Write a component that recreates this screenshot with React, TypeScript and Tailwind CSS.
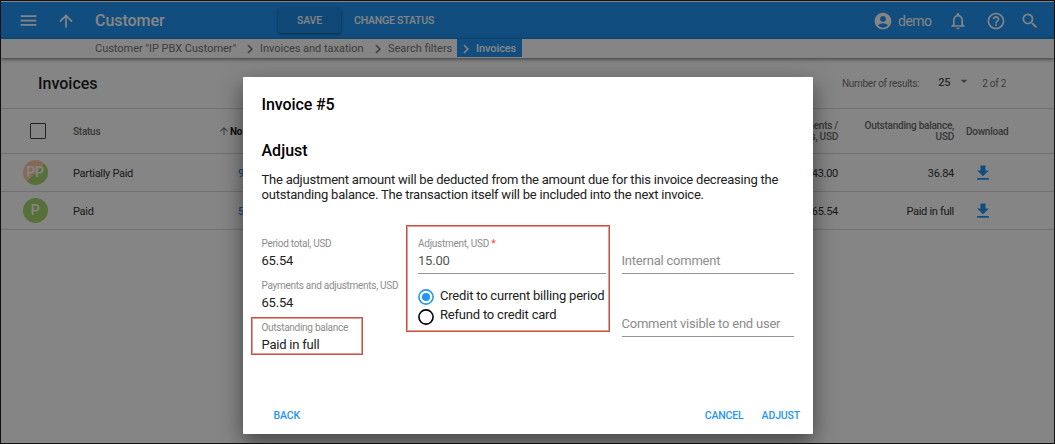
import type { ReactNode } from "react";
import {
  MdAccountCircle,
  MdArrowDropDown,
  MdArrowUpward,
  MdChevronRight,
  MdFileDownload,
  MdHelpOutline,
  MdMenu,
  MdNotificationsNone,
  MdSearch,
} from "react-icons/md";

function TopBar() {
  return (
    <header className="flex h-[37px] shrink-0 items-center bg-[#2196f3] pl-[17px] text-white">
      <MdMenu className="size-[21px] shrink-0" />
      <MdArrowUpward className="ml-[17px] size-5 shrink-0" />
      <h1 className="ml-[19px] w-[183px] text-[16px] leading-5 font-medium tracking-[-0.05px]">Customer</h1>
      <button className="h-[25px] w-[63px] rounded-[2px] bg-[#1e88e5] pt-px text-[10.5px] font-medium tracking-[-0.2px] shadow-[0_1px_3px_rgba(0,0,0,0.5)]">
        SAVE
      </button>
      <button className="ml-[13px] pt-px text-[10.5px] font-medium tracking-[-0.2px] whitespace-nowrap">CHANGE STATUS</button>
      <div className="ml-auto flex items-center pr-[14px]">
        <MdAccountCircle className="size-5" />
        <span className="ml-[5px] w-[50px] text-[14px] leading-5 tracking-[-0.5px]">demo</span>
        <MdNotificationsNone className="size-5" />
        <MdHelpOutline className="ml-[18px] size-5" />
        <MdSearch className="ml-[14px] size-5" />
      </div>
    </header>
  );
}

function Crumb({ children }: { children: ReactNode }) {
  return (
    <span className="flex items-center">
      <MdChevronRight className="size-[18px]" />
      <span className="ml-px">{children}</span>
    </span>
  );
}

function Breadcrumbs() {
  return (
    <nav className="relative flex h-[19px] shrink-0 bg-white pl-[94px] text-[11px] leading-[18px] tracking-[-0.02px] whitespace-nowrap text-[#757575] shadow-[0_1px_4px_rgba(0,0,0,0.6)]">
      <span className="w-[146px] pt-px">Customer "IP PBX Customer"</span>
      <span className="flex w-[128px]">
        <Crumb>Invoices and taxation</Crumb>
      </span>
      <span className="flex w-[88px]">
        <Crumb>Search filters</Crumb>
      </span>
      <span className="flex h-[18px] w-[65px] bg-[#2196f3] pt-px font-medium tracking-[-0.1px] text-white">
        <Crumb>Invoices</Crumb>
      </span>
    </nav>
  );
}

const cols = "grid grid-cols-[72px_160px_494px_111px_117px_1fr]";

function Row({ badge, status, no, paid, balance }: { badge: ReactNode; status: string; no: string; paid: string; balance: string }) {
  return (
    <div className={`${cols} h-[38px] items-center border-b border-[#d8d8d8] text-[11px] tracking-[-0.3px] text-[#333]`}>
      <div className="pl-[21.5px]">{badge}</div>
      <span className="pt-[3px]">{status}</span>
      <span className="pt-[3px] pl-[5px] font-medium text-[#2196f3]">{no}</span>
      <span className="pt-[3px] text-right">{paid}</span>
      <span className="pt-[3px] pr-px text-right">{balance}</span>
      <MdFileDownload className="ml-[18px] size-5 text-[#2196f3]" />
    </div>
  );
}

function InvoiceTable() {
  return (
    <main>
      <div className="flex h-[51px] items-center border-b border-[#d8d8d8] pl-[37px] text-[10px] tracking-[-0.28px] text-[#757575]">
        <h2 className="pt-px text-[16px] font-medium tracking-normal text-[#212121]">Invoices</h2>
        <span className="ml-auto pt-px">Number of results:</span>
        <span className="ml-[19px] text-[11px] font-medium text-[#555]">25</span>
        <MdArrowDropDown className="mb-1 ml-[6px] size-4" />
        <span className="mr-[48px] ml-[10px] pt-px">2 of 2</span>
      </div>
      <div className={`${cols} h-[45px] items-center border-b border-[#d8d8d8] text-[10px] leading-[11px] font-medium tracking-[-0.25px] text-[#6b6b6b]`}>
        <span className="ml-[29px] size-4 rounded-[1px] border border-[#444]" />
        <span>Status</span>
        <span className="flex items-center font-bold text-[#212121]">
          <MdArrowUpward className="-ml-[15px] size-3 shrink-0 text-[#757575]" />
          No.
        </span>
        <span className="text-right">Payments /<br />adjustments, USD</span>
        <span className="pr-px text-right">Outstanding balance,<br />USD</span>
        <span className="pl-[11px]">Download</span>
      </div>
      <Row
        badge={
          <span className="grid size-[25px] place-items-center rounded-full bg-[linear-gradient(135deg,#ffccaa_50%,#a8d66f_50%)] text-[14px] font-medium text-white">
            PP
          </span>
        }
        status="Partially Paid"
        no="9"
        paid="43.00"
        balance="36.84"
      />
      <Row
        badge={<span className="grid size-[25px] place-items-center rounded-full bg-[#a8d66f] text-[14px] font-medium text-white">P</span>}
        status="Paid"
        no="5"
        paid="65.54"
        balance="Paid in full"
      />
    </main>
  );
}

function Fact({ label, value }: { label: string; value: string }) {
  return (
    <div className="h-[42px] whitespace-nowrap">
      <div className="text-[10px] leading-3 tracking-[-0.28px] text-[#8c8c8c]">{label}</div>
      <div className="mt-1 text-[13px] leading-[14px] tracking-[-0.22px] text-[#212121]">{value}</div>
    </div>
  );
}

function Option({ checked, children }: { checked?: boolean; children: ReactNode }) {
  return (
    <label className="flex h-[19px] items-start text-[13px] leading-[14px] tracking-[-0.2px] whitespace-nowrap text-[#212121]">
      <svg viewBox="0 0 16 16" className={`mr-[6px] size-4 shrink-0 ${checked ? "text-[#2196f3]" : "mt-px text-black"}`}>
        <circle cx="8" cy="8" r="7.1" fill="none" stroke="currentColor" strokeWidth="1.6" />
        {checked && <circle cx="8" cy="8" r="4" fill="currentColor" />}
      </svg>
      {children}
    </label>
  );
}

function AdjustDialog() {
  return (
    <section className="absolute top-[77px] left-[243px] flex h-[357px] w-[570px] flex-col rounded-[1px] bg-white px-[18.5px] shadow-[0_8px_22px_rgba(0,0,0,0.5)]">
      <h2 className="mt-[18px] text-[16px] leading-5 font-medium tracking-[-0.1px] text-black">Invoice #5</h2>
      <h3 className="mt-[26px] text-[16px] leading-5 font-medium text-black">Adjust</h3>
      <p className="mt-[11px] text-[13px] leading-[15px] tracking-[-0.22px] whitespace-nowrap text-[#212121]">
        The adjustment amount will be deducted from the amount due for this invoice decreasing the
        <br />
        outstanding balance. The transaction itself will be included into the next invoice.
      </p>
      <div className="mt-[23px] flex h-[130px]">
        <div className="w-[144.5px] shrink-0 pt-[13px]">
          <Fact label="Period total, USD" value="65.54" />
          <Fact label="Payments and adjustments, USD" value="65.54" />
          <div className="-mt-[5px] -ml-[10.5px] h-[38px] w-[112px] border border-[#c6513f] pt-1 pl-[9.5px] shadow-[inset_0_0_0_1px_rgba(198,81,63,0.55)]">
            <Fact label="Outstanding balance" value="Paid in full" />
          </div>
        </div>
        <div className="h-[107px] w-[204px] shrink-0 border border-[#c6513f] pt-3 pl-[11px] shadow-[inset_0_0_0_1px_rgba(198,81,63,0.55)]">
          <div className="text-[10px] leading-3 tracking-[-0.25px] text-[#8c8c8c]">
            Adjustment, USD <span className="text-[#f44336]">*</span>
          </div>
          <div className="mt-1 mr-[3px] h-5 border-b border-[#949494] text-[13px] leading-[14px] tracking-[-0.22px] text-[#555]">15.00</div>
          <div className="mt-[15px]">
            <Option checked>Credit to current billing period</Option>
            <Option>Refund to credit card</Option>
          </div>
        </div>
        <div className="ml-[11.5px] w-[172px] shrink-0 pt-[29px] text-[13px] leading-[14px] tracking-[-0.22px] text-[#8c8c8c]">
          <div className="h-[20px] border-b border-[#949494]">Internal comment</div>
          <div className="mt-[43px] h-[20px] border-b border-[#949494]">Comment visible to end user</div>
        </div>
      </div>
      <div className="mt-auto mb-[11px] flex pl-[12px] text-[10.5px] leading-[14px] font-medium tracking-[-0.15px] text-[#2196f3]">
        <button>BACK</button>
        <button className="ml-auto">CANCEL</button>
        <button className="-mr-[5.5px] ml-[18px]">ADJUST</button>
      </div>
    </section>
  );
}

export default function App() {
  return (
    <div className="relative h-[444px] w-[1055px] overflow-hidden bg-white font-[Roboto,sans-serif]">
      <div className="flex h-full flex-col border-x border-white pt-[2px]">
        <TopBar />
        <Breadcrumbs />
        <InvoiceTable />
      </div>
      <div className="absolute inset-0 border border-[#111] bg-black/48" />
      <AdjustDialog />
    </div>
  );
}
